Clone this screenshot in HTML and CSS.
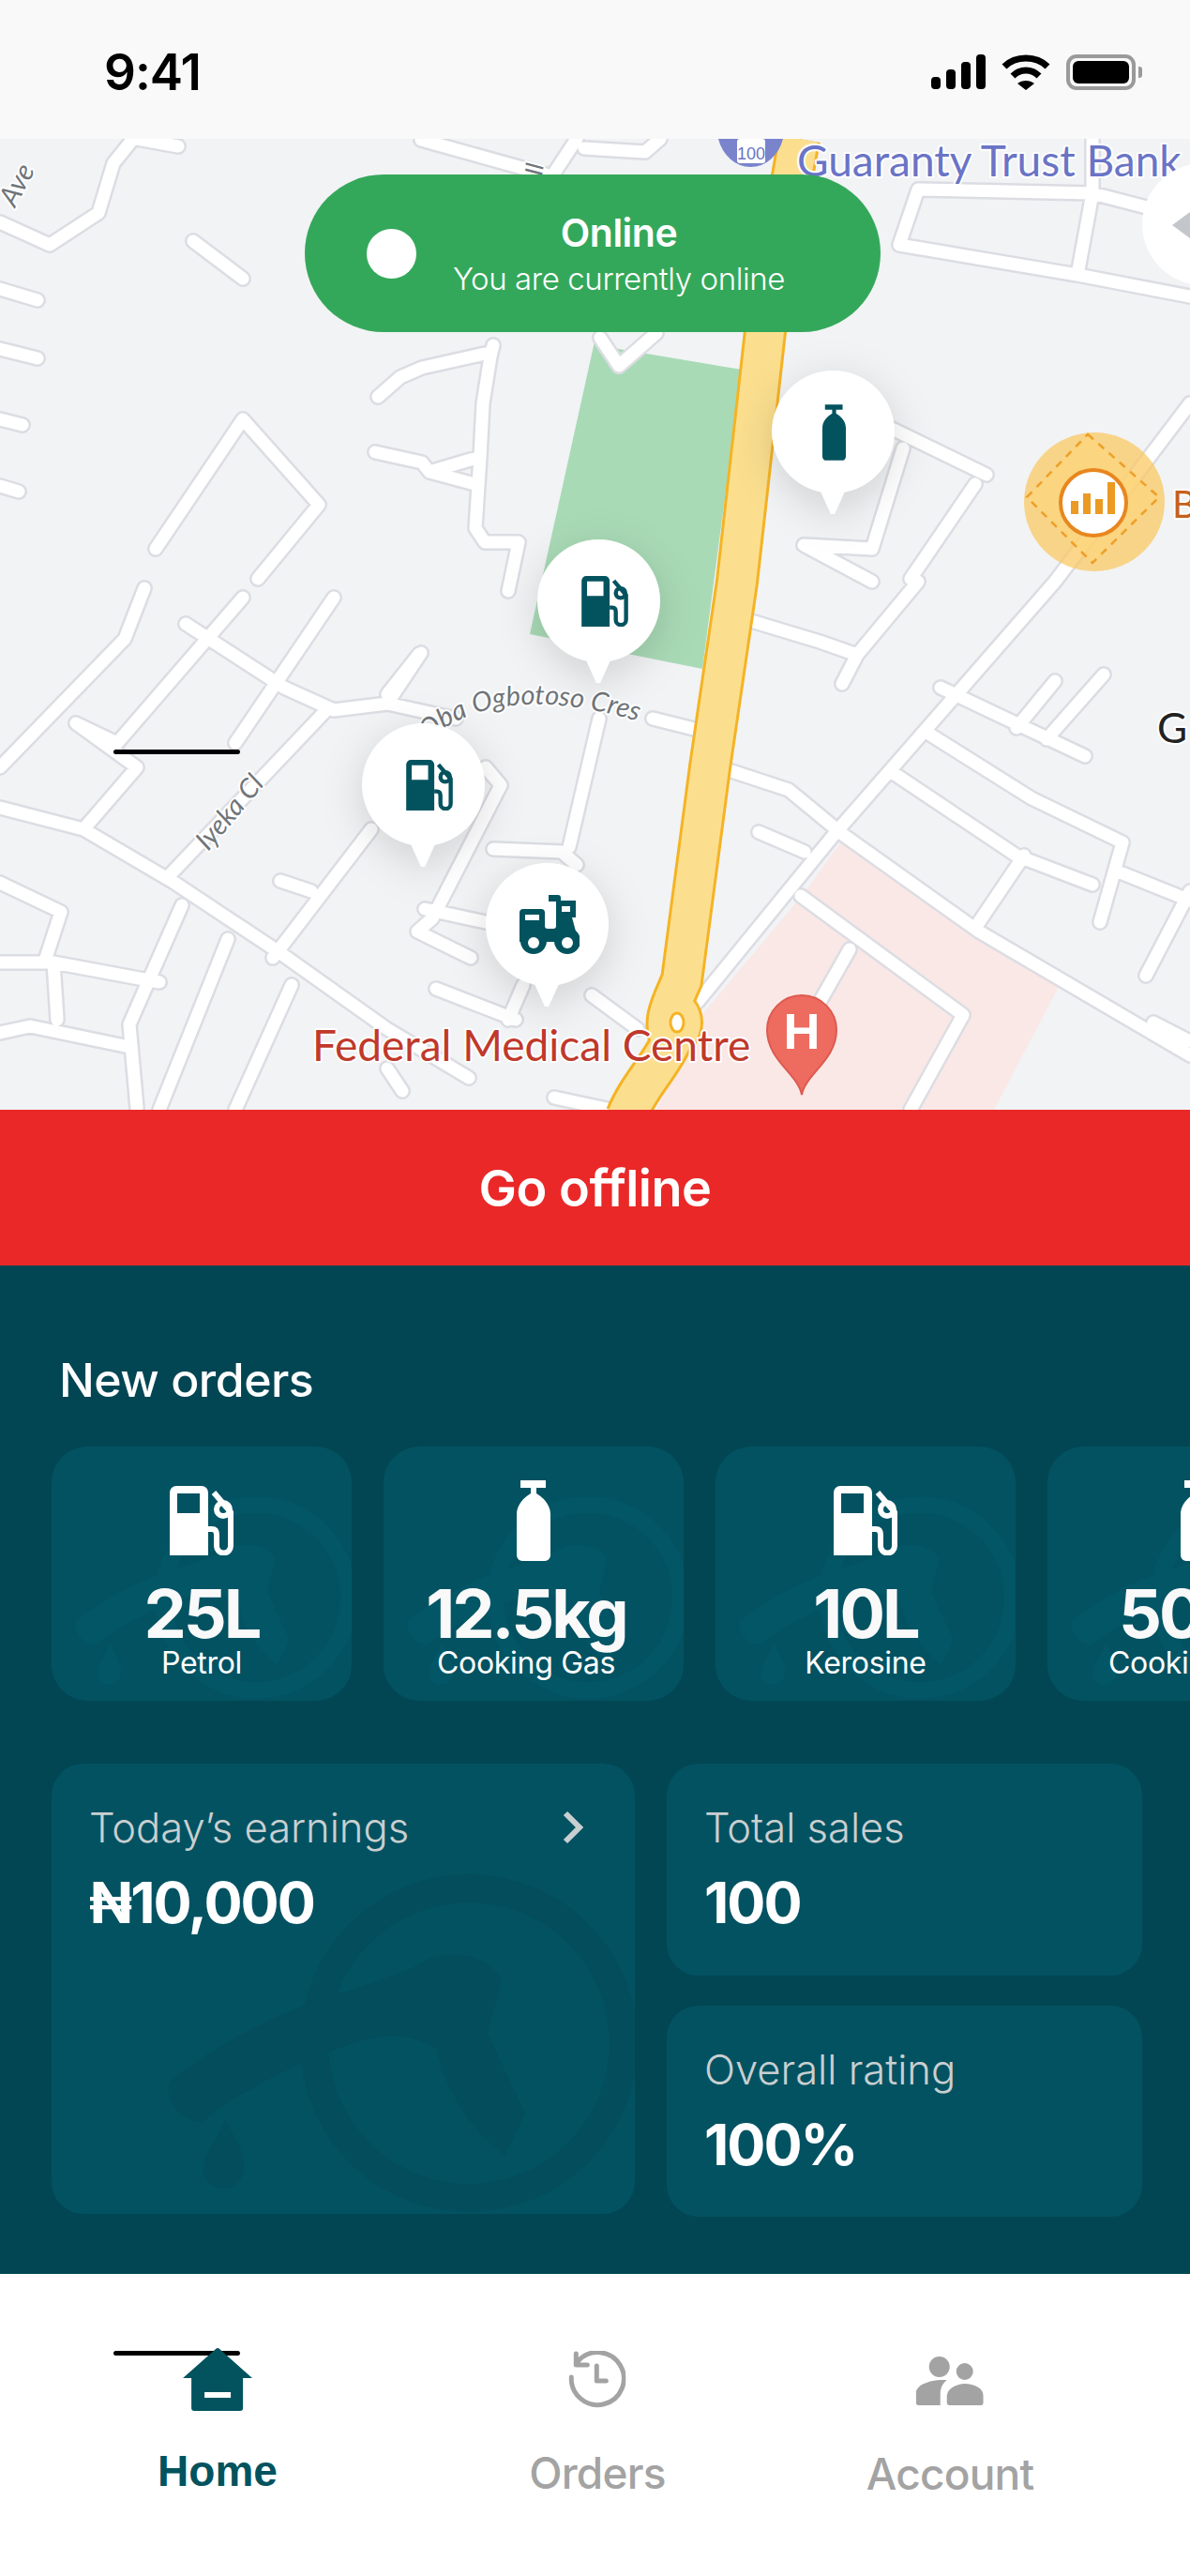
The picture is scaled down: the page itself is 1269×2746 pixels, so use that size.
FILE: index.html
```html
<!DOCTYPE html>
<html lang="en">
<head>
    <meta charset="UTF-8" />
    <meta name="viewport" content="width=device-width, initial-scale=1.0" />
    <title>Home</title>
    <link rel="stylesheet" href="styles.css">
</head>
<body>

<svg class="defs" width="0" height="0">
    <defs>
        <symbol id="fuel" viewBox="0 0 68 74">
            <path fill-rule="evenodd" d="M7 0H34a7 7 0 0 1 7 7V74H0V7a7 7 0 0 1 7-7ZM8 8V29H32V8Z"/>
            <path fill="none" stroke="currentColor" stroke-width="6" d="M41 46H45Q50 46 50 52V64A7.5 7.5 0 0 0 65 64V28L47 7"/>
            <circle fill="none" stroke="currentColor" stroke-width="6" cx="57" cy="25" r="7"/>
        </symbol>
        <symbol id="gas" viewBox="0 0 36 86">
            <path d="M4 0H31V8H21V14C28 18 36 26 36 36V80a6 6 0 0 1-6 6H6a6 6 0 0 1-6-6V36C0 26 8 18 15 14V8H4Z"/>
        </symbol>
        <symbol id="mark" viewBox="0 0 540 360">
            <circle cx="360" cy="180" r="165" fill="none" stroke="currentColor" stroke-width="30"/>
            <path d="M40 222C90 180 170 140 240 122L300 100C330 76 380 84 395 112L380 170L420 255L398 300C360 270 335 230 325 185C300 170 270 170 250 176C190 194 120 228 78 262C60 270 35 245 40 222Z"/>
            <path d="M100 262C116 290 125 305 118 322A22 22 0 0 1 78 322C72 305 88 290 100 262Z"/>
        </symbol>
    </defs>
</svg>

<div class="app">

    <div class="status-bar">
        <span class="clock">9:41</span>
        <div class="status-icons">
            <svg class="ic-signal" viewBox="0 0 58 37"><rect x="0" y="24" width="10" height="13" rx="4"/><rect x="16" y="16" width="10" height="21" rx="4"/><rect x="32" y="8" width="10" height="29" rx="4"/><rect x="48" y="0" width="10" height="37" rx="4"/></svg>
            <svg class="ic-wifi" viewBox="0 0 52 38"><path fill="none" stroke="#000" stroke-width="7" d="M3 13C15 1 37 1 49 13"/><path fill="none" stroke="#000" stroke-width="7" d="M12 23C20 15 32 15 40 23"/><path d="M17 31C22 27 30 27 35 31L26 38Z"/></svg>
            <div class="battery"><div class="battery-level"></div></div>
        </div>
    </div>

    <div class="map">
        <svg class="map-art" viewBox="0 148 1269 1035">
            <defs>
                <path id="roads" d="M0 237L53 261L105 227L121 174L142 148M449 149L582 186M615 148L590 186M146 148L190 156M704 148L688 162L623 158M206 257L259 297M0 308L40 320M0 372L40 382M0 447L24 453M0 518L20 524M403 423L427 402L450 392L517 377M526 368L523 380L515 430L512 487L510 517L507 563L517 578L553 578L542 630M400 482L450 493L458 503L512 487M458 503L510 517M447 697L413 740M166 585L259 447L340 538L275 617M198 665L303 733L356 757L413 750L449 696M259 637L125 792L81 771M356 637L251 792M0 861L89 884L186 941L299 1016L413 1097L500 1149M154 627L133 681L0 818M81 771L146 818L89 884M348 757L178 936M518 818L534 837L461 979L445 993L502 1021M396 884L291 1021M299 939L332 950M194 965L138 1092L146 1181M243 1001L170 1183M311 1050L251 1183M0 941L65 972L49 1021M0 1026L57 1026L170 1047M57 1026L61 1087M0 1101L32 1094L138 1116M639 766L607 903M526 905L599 908L615 922M453 969L518 983M465 1054L550 1087M558 1050L542 1087M631 1061L680 1097M413 1139L429 1163M591 1170L647 1182M413 750L486 766M696 766L744 778M777 821L841 842L898 889L1044 993L1269 1125M1269 430L1125 620L890 889L744 1068M801 662L874 684L914 698M979 620L914 698L898 729M947 455L1052 506M963 478L930 585L857 581L930 620M1040 516L971 617M979 202L959 261L1149 293L1165 206L979 202M1165 206L1269 233M1165 150V206M1149 293L1269 316M1003 733L1157 806M1125 726L1084 776M1177 719L1116 788M987 780L1100 851L1197 898L1173 983M951 823L1084 912L1165 943M1092 912L1044 983M1197 931L1269 960M1222 1040L1269 950M854 955L1027 1082L971 1183M906 1012L856 1100M809 887L858 908M1269 1110L1230 1090M640 360L660 390L700 355"/>
                <path id="highway" d="M852 148L816 353L786 620L757 818L727 1045C716 1070 705 1090 716 1110C705 1135 680 1160 668 1190"/>
            </defs>
            <rect x="0" y="148" width="1269" height="1035" fill="#f1f3f5"/>
            <polygon class="park" points="634,364 660,372 791,394 749,713 565,676"/>
            <polygon class="hospital" points="898,896 1129,1052 1060,1183 700,1183 750,1080 855,955"/>
            <g class="roads">
                <use href="#roads" class="road-case"/>
                <use href="#roads" class="road-fill"/>
            </g>
            <g class="highway">
                <use href="#highway" class="hw-case"/>
                <ellipse cx="722" cy="1090" rx="28" ry="34" fill="#f5b324"/>
                <use href="#highway" class="hw-fill"/>
                <ellipse cx="722" cy="1090" rx="25" ry="31" fill="#fbdf8f"/>
                <ellipse cx="722" cy="1090" rx="7" ry="10" fill="#fff" stroke="#f5b324" stroke-width="3"/>
            </g>
            <path id="cres" fill="none" d="M456 790Q535 720 700 775"/>
            <path fill="#7a84cd" d="M766 148A36 42 0 0 0 835 148Z"/>
            <rect x="786" y="148" width="30" height="26" rx="3" fill="#fff"/>
            <text class="lbl-shield" x="801" y="170">100</text>
            <text class="lbl lbl-bank" x="850" y="188">Guaranty Trust Bank</text>
            <text class="lbl lbl-grey" transform="translate(16 222) rotate(-62)">Ave</text>
            <text class="lbl lbl-grey lbl-small" transform="translate(578 188) rotate(-82)">Il</text>
            <text class="lbl lbl-grey lbl-med"><textPath href="#cres">Oba Ogbotoso Cres</textPath></text>
            <text class="lbl lbl-grey lbl-med" transform="translate(222 908) rotate(-50)">Iyeka Cl</text>
            <text class="lbl lbl-dark" x="1234" y="792">G</text>
            <text class="lbl lbl-brown" x="1250" y="552">B</text>
            <text class="lbl lbl-red" x="333" y="1131">Federal Medical Centre</text>

            <path fill="#ee6b60" stroke="#dd5a50" stroke-width="2" d="M855 1167C851 1145 818 1130 818 1098A37 37 0 0 1 892 1098C892 1130 859 1145 855 1167Z"/>
            <text class="lbl-h" x="855" y="1118">H</text>

            <ellipse cx="1167" cy="535" rx="75" ry="74" fill="#fbc65a" opacity="0.7"/>
            <path fill="#fdd67a" fill-opacity="0.6" stroke="#ef9f27" stroke-width="2.5" stroke-dasharray="8 7" d="M1160 463L1236 530L1165 600L1095 530Z"/>
            <circle cx="1166" cy="536" r="35" fill="#fff" stroke="#e8871e" stroke-width="4"/>
            <path fill="#eb9a24" d="M1142 534h8v14h-8ZM1155 526h8v22h-8ZM1168 532h8v16h-8ZM1181 514h8v34h-8Z"/>
        </svg>

        <div class="compass"><span class="compass-arrow"></span></div>

        <div class="pin pin-gas"><svg class="pin-ic-gas"><use href="#gas"/></svg></div>
        <div class="pin pin-fuel-a"><svg class="pin-ic-fuel"><use href="#fuel"/></svg></div>
        <div class="pin pin-fuel-b"><svg class="pin-ic-fuel"><use href="#fuel"/></svg></div>
        <div class="pin pin-truck">
            <svg class="pin-ic-truck" viewBox="0 0 64 63">
                <path d="M0 19a4 4 0 0 1 4-4H23a4 4 0 0 1 4 4V33a3 3 0 0 0 3 3H36a3 3 0 0 0 3-3V7H31V0H41a3 3 0 0 1 3 3V6H60V24H56L63 50H0Z"/>
                <circle cx="15" cy="49" r="14"/>
                <circle cx="51" cy="49" r="14"/>
                <circle cx="15" cy="51" r="6" fill="#fff"/>
                <circle cx="51" cy="51" r="6" fill="#fff"/>
                <rect x="6" y="21" width="15" height="6" fill="#fff"/>
                <rect x="45" y="12" width="9" height="6" fill="#fff"/>
            </svg>
        </div>

        <div class="status-pill">
            <span class="status-dot"></span>
            <div class="status-text">
                <div class="status-title">Online</div>
                <div class="status-sub">You are currently online</div>
            </div>
        </div>

        <div class="stray-line stray-map"></div>
    </div>

    <button class="offline-btn" type="button">Go offline</button>

    <div class="dash">
        <h2 class="dash-title">New orders</h2>

        <div class="orders">
            <div class="order">
                <svg class="order-mark"><use href="#mark"/></svg>
                <svg class="order-ic-fuel"><use href="#fuel"/></svg>
                <div class="order-qty">25L</div>
                <div class="order-name">Petrol</div>
            </div>
            <div class="order order-shift">
                <svg class="order-mark"><use href="#mark"/></svg>
                <svg class="order-ic-gas"><use href="#gas"/></svg>
                <div class="order-qty">12.5kg</div>
                <div class="order-name">Cooking Gas</div>
            </div>
            <div class="order">
                <svg class="order-mark"><use href="#mark"/></svg>
                <svg class="order-ic-fuel"><use href="#fuel"/></svg>
                <div class="order-qty">10L</div>
                <div class="order-name">Kerosine</div>
            </div>
            <div class="order">
                <svg class="order-mark"><use href="#mark"/></svg>
                <svg class="order-ic-gas"><use href="#gas"/></svg>
                <div class="order-qty">50kg</div>
                <div class="order-name">Cooking Gas</div>
            </div>
        </div>

        <div class="stats">
            <div class="stat stat-earnings">
                <svg class="stat-mark"><use href="#mark"/></svg>
                <div class="stat-head">
                    <span class="stat-label">Today’s earnings</span>
                    <svg class="chevron" viewBox="0 0 22 36"><path fill="none" stroke="#c9cfd0" stroke-width="6" d="M3 3L18 18L3 33"/></svg>
                </div>
                <div class="stat-value">₦10,000</div>
            </div>
            <div class="stat">
                <span class="stat-label">Total sales</span>
                <div class="stat-value">100</div>
            </div>
            <div class="stat">
                <span class="stat-label">Overall rating</span>
                <div class="stat-value">100%</div>
            </div>
        </div>
    </div>

    <nav class="tabs">
        <div class="stray-line stray-nav"></div>
        <div class="tab tab-home">
            <svg class="ic-home" viewBox="0 0 74 67"><path fill-rule="evenodd" d="M35 1a3 3 0 0 1 4 0L74 32H64V64a3 3 0 0 1-3 3H12a3 3 0 0 1-3-3V32H0ZM23 47V53H51V47Z"/></svg>
            <span class="tab-label">Home</span>
        </div>
        <div class="tab tab-orders">
            <svg class="ic-orders" viewBox="0 0 61 61"><path fill="none" stroke="#a3a3a3" stroke-width="5" stroke-linecap="round" stroke-linejoin="round" d="M3 28A28 28 0 1 0 10 11M8 3V15H20M30 16V32H40"/></svg>
            <span class="tab-label">Orders</span>
        </div>
        <div class="tab tab-account">
            <svg class="ic-account" viewBox="0 0 72 52"><circle cx="25" cy="11" r="11"/><circle cx="52" cy="16" r="9"/><path d="M3 52a3 3 0 0 1-3-3V39C0 30 16 24 33 25C28 29 26 34 26 40V52Z"/><path d="M36 52a3 3 0 0 1-3-3V43C33 34 44 29 52 29C62 29 72 34 72 42V49a3 3 0 0 1-3 3Z"/></svg>
            <span class="tab-label">Account</span>
        </div>
    </nav>

</div>

</body>
</html>
```

FILE: styles.css
```css
* {
    box-sizing: border-box;
}
body {
    margin: 0;
    background: #fff;
    font-family: Inter, "Liberation Sans", sans-serif;
}
.defs {
    position: absolute;
}
.app {
    width: 1269px;
    height: 2746px;
    display: flex;
    flex-direction: column;
    overflow: hidden;
}

/* status bar */
.status-bar {
    height: 148px;
    background: #f9f9f9;
    display: flex;
    justify-content: space-between;
    align-items: flex-start;
    padding: 47px 58px 0 111px;
}
.clock {
    font-size: 53px;
    font-weight: 600;
    line-height: 60px;
    letter-spacing: -1px;
    color: #000;
}
.status-icons {
    display: flex;
    align-items: flex-start;
    gap: 17px;
    padding-top: 11px;
}
.ic-signal {
    width: 58px;
    height: 37px;
}
.ic-wifi {
    width: 52px;
    height: 38px;
}
.battery {
    width: 74px;
    height: 38px;
    border: 4px solid #9a9a9a;
    border-radius: 11px;
    padding: 3px;
    position: relative;
}
.battery::after {
    content: "";
    position: absolute;
    right: -11px;
    top: 9px;
    width: 4px;
    height: 12px;
    background: #9a9a9a;
    border-radius: 0 3px 3px 0;
}
.battery-level {
    height: 100%;
    background: #000;
    border-radius: 6px;
}

/* map */
.map {
    height: 1035px;
    position: relative;
    overflow: hidden;
}
.map-art {
    display: block;
    width: 1269px;
    height: 1035px;
}
.park {
    fill: #a9dab6;
}
.hospital {
    fill: #fae8e6;
}
.roads {
    fill: none;
    stroke-linecap: round;
    stroke-linejoin: round;
}
.road-case {
    stroke: #dcdde3;
    stroke-width: 18;
}
.road-fill {
    stroke: #fff;
    stroke-width: 13;
}
.highway {
    fill: none;
}
.hw-case {
    stroke: #f5b324;
    stroke-width: 46;
}
.hw-fill {
    stroke: #fbdf8f;
    stroke-width: 40;
}
.lbl {
    font-family: Lato, sans-serif;
    paint-order: stroke;
    stroke: #fff;
    stroke-width: 4px;
    stroke-linejoin: round;
}
.lbl-bank {
    font-size: 46px;
    fill: #6a74c6;
}
.lbl-grey {
    font-size: 30px;
    font-style: italic;
    fill: #70757a;
}
.lbl-med {
    font-size: 29px;
}
.lbl-small {
    font-size: 26px;
}
.lbl-dark {
    font-size: 44px;
    fill: #222;
}
.lbl-brown {
    font-size: 40px;
    fill: #c5611c;
}
.lbl-red {
    font-size: 46px;
    fill: #c0392b;
}
.lbl-shield {
    font-family: "Liberation Sans", sans-serif;
    font-size: 18px;
    fill: #6a74c6;
    text-anchor: middle;
}
.lbl-h {
    font-family: "Liberation Sans", sans-serif;
    font-size: 54px;
    font-weight: 700;
    fill: #fff;
    text-anchor: middle;
}
.compass {
    position: absolute;
    left: 1218px;
    top: 26px;
    width: 130px;
    height: 130px;
    border-radius: 50%;
    background: #fff;
}
.compass-arrow {
    position: absolute;
    left: 32px;
    top: 44px;
    border-style: solid;
    border-width: 22px 30px 22px 0;
    border-color: transparent #c3c6ca transparent transparent;
}
.pin {
    position: absolute;
    width: 131px;
    height: 131px;
    border-radius: 50%;
    background: #fff;
    color: #03535f;
    fill: currentColor;
    display: flex;
    align-items: center;
    justify-content: center;
    filter: drop-shadow(0 10px 22px rgba(0, 0, 0, 0.14));
}
.pin::after {
    content: "";
    position: absolute;
    left: 48px;
    bottom: -23px;
    width: 34px;
    height: 34px;
    background: #fff;
    clip-path: polygon(0 0, 100% 0, 56% 97%, 44% 97%);
}
.pin-gas {
    left: 823px;
    top: 247px;
}
.pin-fuel-a {
    left: 573px;
    top: 427px;
}
.pin-fuel-b {
    left: 386px;
    top: 623px;
}
.pin-truck {
    left: 518px;
    top: 772px;
}
.pin-ic-gas {
    width: 25px;
    height: 60px;
    margin-left: 2px;
}
.pin-ic-fuel {
    width: 50px;
    height: 54px;
    margin-left: 12px;
}
.pin-ic-truck {
    width: 64px;
    height: 63px;
    margin-left: 4px;
}
.status-pill {
    position: absolute;
    left: 325px;
    top: 38px;
    width: 614px;
    height: 168px;
    border-radius: 84px;
    background: #34a85a;
    color: #fff;
    display: flex;
    align-items: center;
    padding-left: 66px;
}
.status-dot {
    width: 53px;
    height: 53px;
    border-radius: 50%;
    background: #fff;
    flex-shrink: 0;
}
.status-text {
    width: 360px;
    margin-left: 36px;
    padding-top: 5px;
    text-align: center;
}
.status-title {
    font-size: 41px;
    font-weight: 600;
    line-height: 48px;
    letter-spacing: -0.5px;
}
.status-sub {
    font-size: 33px;
    font-weight: 300;
    line-height: 50px;
    letter-spacing: -0.4px;
}
.stray-line {
    position: absolute;
    left: 121px;
    width: 135px;
    height: 5px;
    border-radius: 3px;
    background: #000;
}
.stray-map {
    top: 651px;
}
.stray-nav {
    top: 82px;
}

/* offline button */
.offline-btn {
    height: 166px;
    border: none;
    background: #ea2828;
    color: #fff;
    font-family: inherit;
    font-size: 54px;
    font-weight: 600;
    letter-spacing: -0.5px;
    cursor: pointer;
}

/* dashboard */
.dash {
    height: 1075px;
    background: #024654;
    padding: 92px 0 0 55px;
}
.dash-title {
    margin: 0 0 41px 8px;
    font-size: 50px;
    font-weight: 500;
    line-height: 60px;
    letter-spacing: -0.5px;
    color: #fff;
}
.orders {
    display: flex;
    gap: 34px;
    width: 1214px;
    overflow: hidden;
}
.order {
    width: 320px;
    height: 271px;
    flex-shrink: 0;
    border-radius: 38px;
    background: #035262;
    position: relative;
    overflow: hidden;
    display: flex;
    flex-direction: column;
    align-items: center;
    color: #fff;
    fill: #fff;
}
.order-mark {
    position: absolute;
    left: 2px;
    top: 53px;
    width: 324px;
    height: 216px;
    color: #025666;
    fill: #025666;
}
.order-ic-fuel {
    position: relative;
    width: 68px;
    height: 74px;
    margin-top: 42px;
}
.order-ic-gas {
    position: relative;
    width: 36px;
    height: 86px;
    margin-top: 36px;
    margin-bottom: -6px;
}
.order-qty {
    position: relative;
    margin-top: 27px;
    font-size: 72px;
    font-weight: 700;
    line-height: 70px;
    letter-spacing: -3px;
    color: #f9f9f9;
}
.order-name {
    position: relative;
    font-size: 32px;
    font-weight: 400;
    line-height: 36px;
    letter-spacing: -0.3px;
}
.order-shift .order-qty,
.order-shift .order-name {
    left: -8px;
}
.stats {
    margin-top: 67px;
    display: grid;
    grid-template-columns: 622px 507px;
    grid-template-rows: 226px 225px;
    gap: 32px 34px;
}
.stat {
    border-radius: 34px;
    background: #035262;
    padding: 40px 40px 0;
    position: relative;
    overflow: hidden;
}
.stat-earnings {
    grid-row: 1 / span 2;
    height: 480px;
}
.stat-mark {
    position: absolute;
    left: 85px;
    top: 118px;
    width: 540px;
    height: 360px;
    color: #034d5c;
    fill: #034d5c;
}
.stat-head {
    position: relative;
    display: flex;
    justify-content: space-between;
    align-items: center;
    padding-right: 15px;
}
.chevron {
    width: 22px;
    height: 36px;
}
.stat-label {
    position: relative;
    font-size: 43.5px;
    font-weight: 300;
    line-height: 56px;
    color: #c9cfd0;
}
.stat-value {
    position: relative;
    margin-top: 18px;
    font-size: 61px;
    font-weight: 700;
    line-height: 68px;
    letter-spacing: -2px;
    color: #fff;
}

/* bottom tabs */
.tabs {
    flex: 1;
    position: relative;
    background: #fff;
    display: flex;
    align-items: flex-start;
}
.tab {
    position: absolute;
    top: 0;
    display: flex;
    flex-direction: column;
    align-items: center;
    transform: translateX(-50%);
    color: #a3a3a3;
    fill: #a3a3a3;
}
.tab-label {
    font-size: 46px;
    font-weight: 500;
    line-height: 54px;
    letter-spacing: -0.8px;
}
.tab-home {
    left: 232px;
    padding-top: 79px;
    color: #03535f;
    fill: #03535f;
}
.tab-home .tab-label {
    margin-top: 37px;
    font-family: "Liberation Sans", sans-serif;
    font-weight: 700;
    letter-spacing: 0;
}
.tab-orders {
    left: 637px;
    padding-top: 82px;
}
.tab-orders .tab-label {
    margin-top: 42px;
}
.tab-account {
    left: 1013px;
    padding-top: 88px;
}
.tab-account .tab-label {
    margin-top: 46px;
}
.ic-home {
    width: 74px;
    height: 67px;
}
.ic-orders {
    width: 61px;
    height: 61px;
}
.ic-account {
    width: 72px;
    height: 52px;
}
```
